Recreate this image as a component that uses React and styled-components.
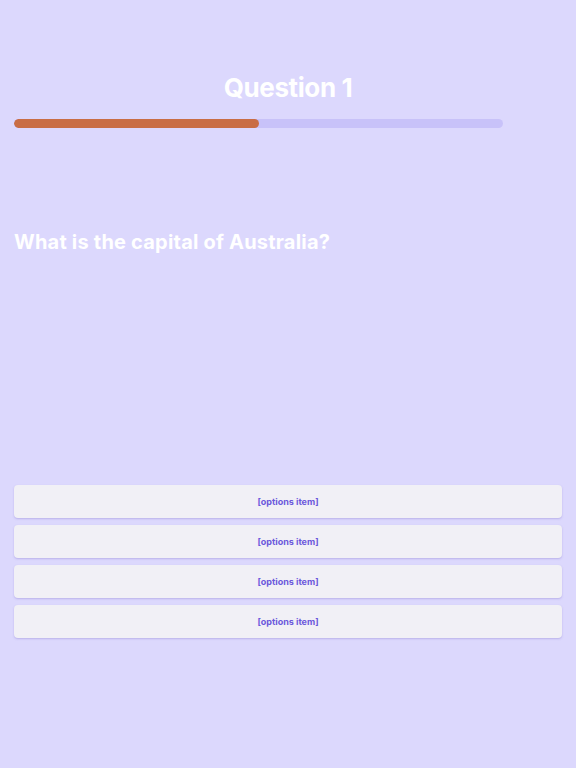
import React from 'react'
import styled, { createGlobalStyle } from 'styled-components'

const GlobalStyle = createGlobalStyle`
  html, body {
    margin: 0;
    padding: 0;
    background: #dcd8fd;
  }
  body {
    font-family: Inter, "Noto Sans", sans-serif;
  }
`;

const Page = styled.div`
  min-height: 768px;
  box-sizing: border-box;
  padding: 70px 14px 0;
  display: flex;
  flex-direction: column;
`;

const Title = styled.h1`
  margin: 0;
  text-align: center;
  color: #ffffff;
  font-size: 26px;
  font-weight: 700;
  line-height: 36px;
  letter-spacing: -0.4px;
`;

const Track = styled.div`
  margin-top: 13px;
  width: 489px;
  height: 9px;
  border-radius: 5px;
  background: #c8c2f9;
  overflow: hidden;
`;

const Fill = styled.div`
  height: 100%;
  border-radius: 5px;
  background: #c96d45;
`;

const Question = styled.h2`
  margin: 100px 0 0;
  color: #ffffff;
  font-size: 20px;
  font-weight: 700;
  line-height: 28px;
  letter-spacing: 0.2px;
`;

const Options = styled.div`
  margin-top: 229px;
  display: flex;
  flex-direction: column;
  gap: 7px;
`;

const Option = styled.button`
  height: 33px;
  padding: 0;
  border: none;
  border-radius: 4px;
  background: #f1f0f6;
  box-shadow: 0 1px 2px rgba(120, 105, 200, 0.35);
  color: #6b58dc;
  font-family: Inter, "Noto Sans", sans-serif;
  font-size: 9px;
  font-weight: 700;
  cursor: pointer;
`;

export default function App() {
  const progress = 50
  return (
    <>
      <GlobalStyle />
      <Page>
        <Title>Question 1</Title>
        <Track>
          <Fill style={{ width: progress + '%' }} />
        </Track>
        <Question>What is the capital of Australia?</Question>
        <Options>
          {[0, 1, 2, 3].map(i => (
            <Option key={i}>[options item]</Option>
          ))}
        </Options>
      </Page>
    </>
  )
}
